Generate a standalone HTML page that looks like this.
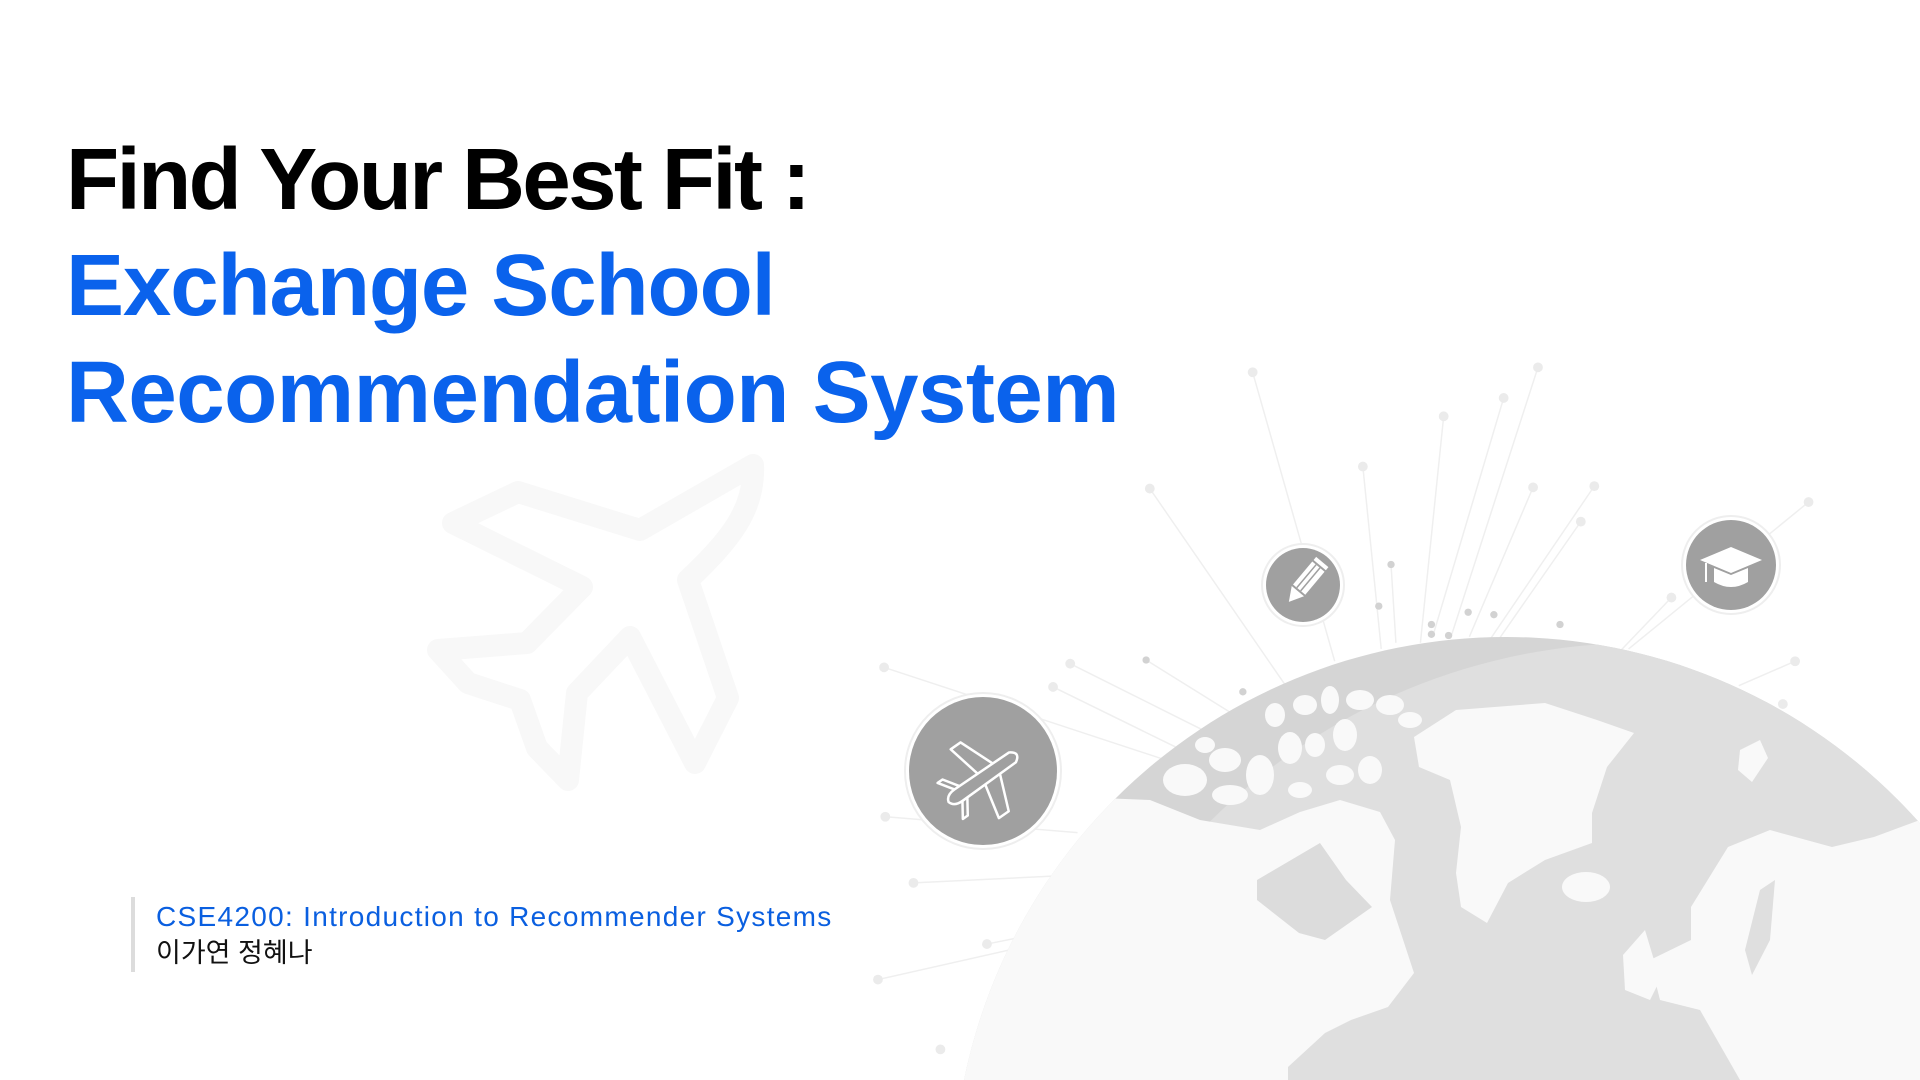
<!DOCTYPE html>
<html><head><meta charset="utf-8"><style>
html,body{margin:0;padding:0;background:#fff;width:1920px;height:1080px;overflow:hidden;}
body{position:relative;font-family:"Liberation Sans",sans-serif;}
svg{position:absolute;left:0;top:0;display:block;overflow:hidden;}
.t{position:absolute;left:66px;font-weight:bold;font-size:87px;white-space:nowrap;letter-spacing:-0.5px;line-height:1;}
.sub{position:absolute;left:156px;white-space:nowrap;font-family:"Liberation Sans","Noto Sans CJK KR",sans-serif;line-height:1.2;}
</style></head><body>
<svg width="1920" height="1080" viewBox="0 0 1920 1080">
 <path d="M753,465 L640,530 L518,492 L453,523 L582,587 L527,643 L438,650 L468,683 L520,700 L537,748 L568,780 L577,693 L630,637 L695,763 L728,698 L688,580 C730,540 755,510 753,465 Z" fill="none" stroke="#f8f8f8" stroke-width="22" stroke-linejoin="round"/>
</svg>
<svg width="1920" height="1080" viewBox="0 0 1568 882">
 <g stroke="#efefef" stroke-width="1.2" fill="none">
  <line x1="1023" y1="304" x2="1090" y2="540"/><line x1="1256" y1="300" x2="1185" y2="520"/>
  <line x1="1228" y1="325" x2="1170" y2="520"/><line x1="1179" y1="340" x2="1160" y2="525"/>
  <line x1="1113" y1="381" x2="1128" y2="530"/><line x1="939" y1="399" x2="1050" y2="560"/>
  <line x1="1136" y1="461" x2="1140" y2="525"/><line x1="1252" y1="398" x2="1200" y2="520"/>
  <line x1="1302" y1="397" x2="1215" y2="525"/><line x1="1291" y1="426" x2="1222" y2="525"/>
  <line x1="1477" y1="410" x2="1330" y2="530"/><line x1="1365" y1="488" x2="1320" y2="535"/>
  <line x1="874" y1="542" x2="990" y2="600"/><line x1="722" y1="545" x2="950" y2="620"/>
  <line x1="860" y1="561" x2="960" y2="610"/><line x1="936" y1="539" x2="1010" y2="585"/>
  <line x1="1466" y1="540" x2="1420" y2="560"/>
  <line x1="723" y1="667" x2="880" y2="680"/><line x1="746" y1="721" x2="870" y2="715"/>
  <line x1="806" y1="771" x2="860" y2="760"/><line x1="717" y1="800" x2="850" y2="770"/>
 </g>
 <g fill="#ebebeb">
  <circle cx="1023" cy="304" r="4"/><circle cx="1256" cy="300" r="4"/><circle cx="1228" cy="325" r="4"/>
  <circle cx="1179" cy="340" r="4"/><circle cx="1113" cy="381" r="4"/><circle cx="939" cy="399" r="4"/>
  <circle cx="1252" cy="398" r="4"/><circle cx="1302" cy="397" r="4"/><circle cx="1291" cy="426" r="4"/>
  <circle cx="1477" cy="410" r="4"/><circle cx="874" cy="542" r="4"/><circle cx="722" cy="545" r="4"/>
  <circle cx="860" cy="561" r="4"/><circle cx="1466" cy="540" r="4"/><circle cx="1456" cy="575" r="4"/>
  <circle cx="723" cy="667" r="4"/><circle cx="746" cy="721" r="4"/><circle cx="806" cy="771" r="4"/>
  <circle cx="717" cy="800" r="4"/><circle cx="768" cy="857" r="4"/><circle cx="1365" cy="488" r="4"/>
 </g>
 <g fill="#d2d2d2">
  <circle cx="1136" cy="461" r="3"/><circle cx="1169" cy="510" r="3"/><circle cx="1199" cy="500" r="3"/>
  <circle cx="1220" cy="502" r="3"/><circle cx="1126" cy="495" r="3"/><circle cx="1274" cy="510" r="3"/>
  <circle cx="936" cy="539" r="3"/><circle cx="1015" cy="565" r="3"/><circle cx="1169" cy="518" r="3"/><circle cx="1183" cy="519" r="3"/>
 </g>
</svg>
<svg width="1920" height="1080" viewBox="0 0 1920 1080">
 <defs><clipPath id="g"><circle cx="1506" cy="1190" r="553"/></clipPath></defs>
 <circle cx="1506" cy="1190" r="553" fill="#d5d5d5"/>
 <g clip-path="url(#g)">
  <circle cx="1640" cy="1250" r="607" fill="#dfdfdf"/>
  <path d="M900,790 L1150,800 L1200,820 L1260,830 L1300,812 L1340,800 L1380,812 L1395,840 L1390,900 L1414,973 L1388,1007 L1351,1020 L1325,1033 L1288,1067 L1288,1080 L900,1080 Z" fill="#f9f9f9"/>
  <path d="M1257,880 L1320,843 L1346,880 L1372,907 L1325,940 L1299,933 L1257,900 Z" fill="#dcdcdc"/>
  <g fill="#f9f9f9">
   <ellipse cx="1185" cy="780" rx="22" ry="16"/><ellipse cx="1225" cy="760" rx="16" ry="12"/>
   <ellipse cx="1260" cy="775" rx="14" ry="20"/><ellipse cx="1230" cy="795" rx="18" ry="10"/>
   <ellipse cx="1290" cy="748" rx="12" ry="16"/><ellipse cx="1275" cy="715" rx="10" ry="12"/>
   <ellipse cx="1305" cy="705" rx="12" ry="10"/><ellipse cx="1330" cy="700" rx="9" ry="14"/>
   <ellipse cx="1315" cy="745" rx="10" ry="12"/><ellipse cx="1345" cy="735" rx="12" ry="16"/>
   <ellipse cx="1360" cy="700" rx="14" ry="10"/><ellipse cx="1390" cy="705" rx="14" ry="10"/>
   <ellipse cx="1340" cy="775" rx="14" ry="10"/><ellipse cx="1370" cy="770" rx="12" ry="14"/>
   <ellipse cx="1410" cy="720" rx="12" ry="8"/><ellipse cx="1300" cy="790" rx="12" ry="8"/>
   <ellipse cx="1205" cy="745" rx="10" ry="8"/>
  </g>
  <path d="M1414,737 L1456,710 L1545,703 L1597,720 L1634,733 L1607,767 L1592,813 L1592,843 L1545,860 L1508,883 L1487,923 L1461,907 L1456,873 L1461,827 L1450,780 L1419,767 Z" fill="#f9f9f9"/>
  <ellipse cx="1586" cy="887" rx="24" ry="15" fill="#f9f9f9"/>
  <path d="M1740,750 L1760,740 L1768,758 L1752,782 L1738,770 Z" fill="#f9f9f9"/>
  <path d="M1691,907 L1728,847 L1770,830 L1832,847 L1874,837 L1920,820 L1920,1080 L1740,1080 L1700,1010 L1660,1000 L1650,960 L1691,940 Z" fill="#f9f9f9"/>
  <path d="M1760,890 L1775,880 L1770,940 L1752,975 L1745,950 Z" fill="#dfdfdf"/>
  <path d="M1623,955 L1645,930 L1660,980 L1650,1000 L1625,990 Z" fill="#f9f9f9"/>
 </g>
 <circle cx="1303" cy="585" r="41" fill="#fff" stroke="#eee" stroke-width="2"/>
 <circle cx="1303" cy="585" r="37" fill="#a0a0a0"/>
 <g transform="translate(1303,585) rotate(40)" fill="#fff">
  <rect x="-8" y="-24" width="16" height="30"/><path d="M-8,8 L8,8 L0,22 Z"/><rect x="-8" y="-30" width="16" height="4"/>
  <g stroke="#a0a0a0" stroke-width="1.5"><line x1="-3" y1="-24" x2="-3" y2="6"/><line x1="2" y1="-24" x2="2" y2="6"/></g>
 </g>
 <circle cx="1731" cy="565" r="49" fill="#fff" stroke="#eee" stroke-width="2"/>
 <circle cx="1731" cy="565" r="45" fill="#a0a0a0"/>
 <path d="M1700,560 L1731,547 L1762,560 L1731,573 Z" fill="#fff"/>
 <path d="M1714,568 L1714,582 Q1731,592 1748,582 L1748,568 L1731,575 Z" fill="#fff"/>
 <line x1="1706" y1="563" x2="1706" y2="582" stroke="#fff" stroke-width="2"/>
 <circle cx="983" cy="771" r="78" fill="#fff" stroke="#eee" stroke-width="2"/>
 <circle cx="983" cy="771" r="74" fill="#a0a0a0"/>
 <g transform="translate(983,778) rotate(-35)" fill="none" stroke="#fff" stroke-width="2.5" stroke-linejoin="round">
  <path d="M-42,0 Q-40,-7 -30,-7 L36,-6 Q46,0 36,6 L-30,7 Q-40,7 -42,0 Z"/>
  <path d="M-2,-7 L-10,-42 L2,-42 L16,-7"/>
  <path d="M-2,7 L-10,42 L2,42 L16,7"/>
  <path d="M-30,-7 L-40,-22 L-34,-22 L-24,-7"/>
  <path d="M-30,7 L-40,22 L-34,22 L-24,7"/>
 </g>
</svg>
<div class="t" style="top:136px;color:#000;letter-spacing:-2.6px;">Find Your Best Fit :</div>
<div class="t" style="top:242px;color:#0a62ec;letter-spacing:-1.1px;">Exchange School</div>
<div class="t" style="top:349px;color:#0a62ec;">Recommendation System</div>
<div style="position:absolute;left:131px;top:897px;width:4px;height:75px;background:#dcdcdc;"></div>
<div class="sub" style="top:900px;font-size:28px;color:#0a5fe0;letter-spacing:1.3px;">CSE4200: Introduction to Recommender Systems</div>
<div class="sub" style="top:937px;font-size:27px;color:#111;">이가연 정혜나</div>
</body></html>
